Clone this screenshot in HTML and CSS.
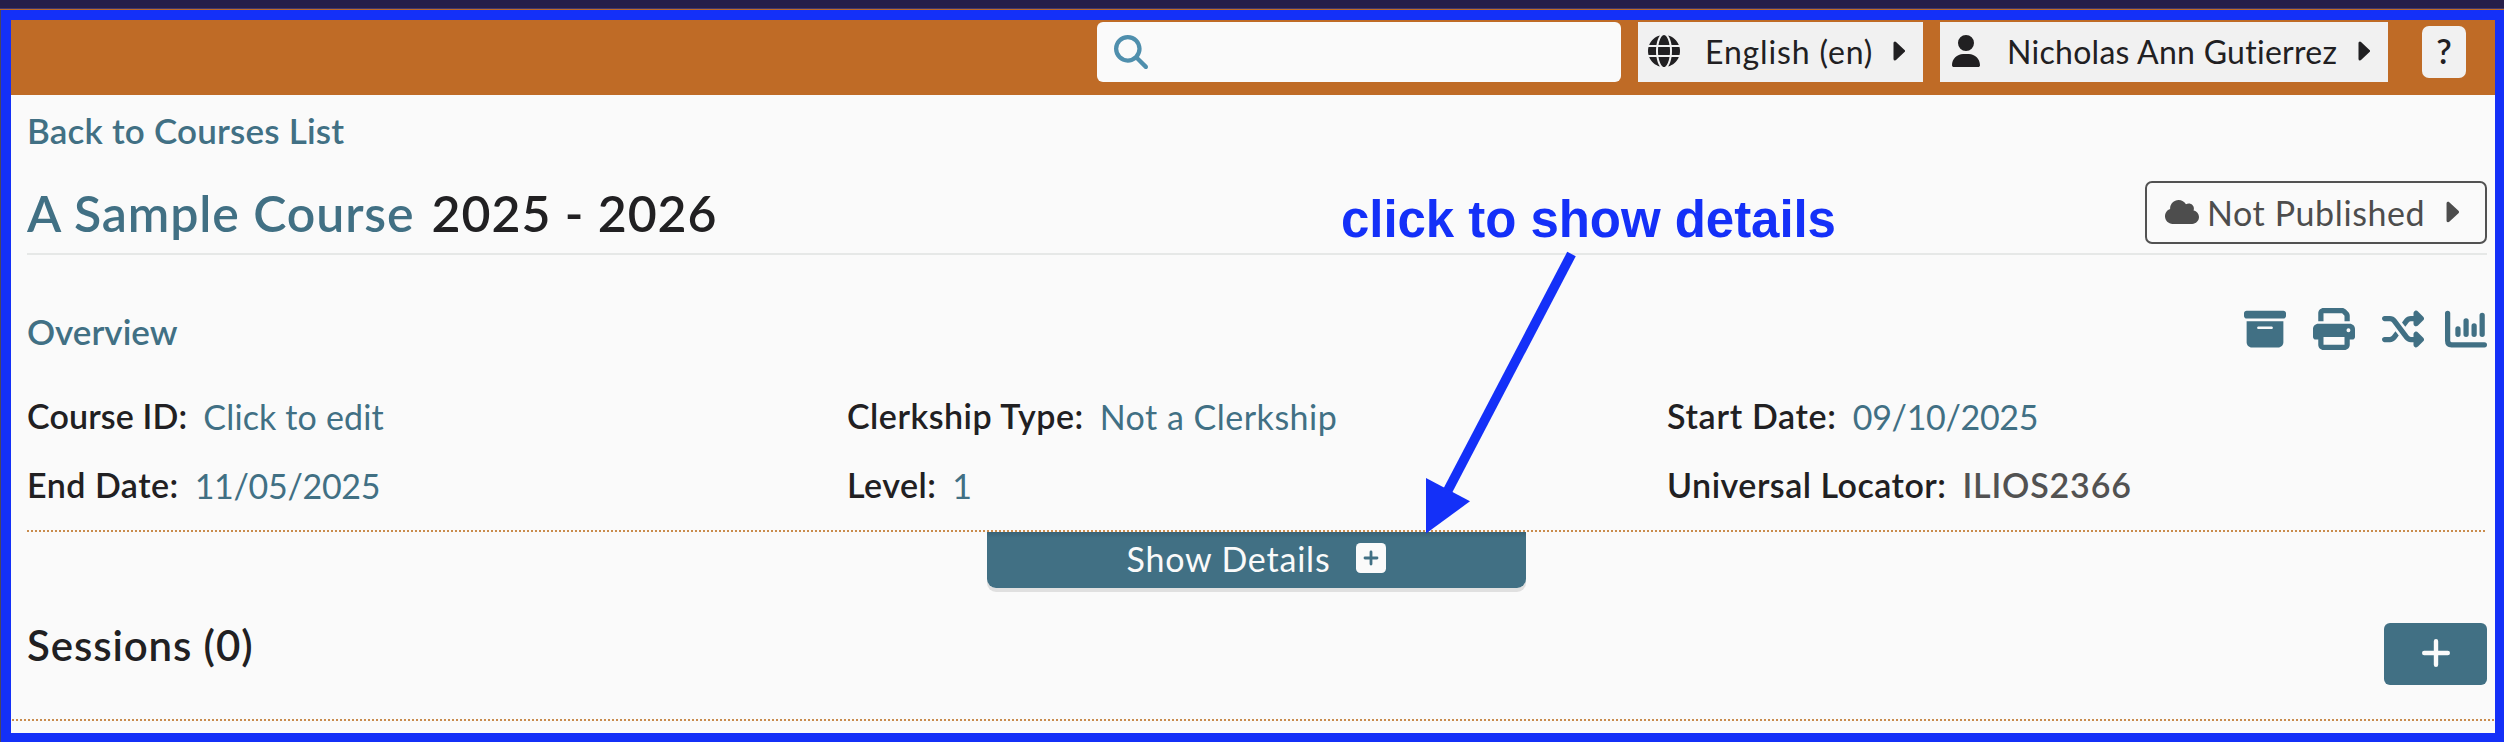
FILE: index.html
```html
<!DOCTYPE html>
<html lang="en">
<head>
<meta charset="utf-8">
<title>A Sample Course</title>
<link rel="stylesheet" href="styles.css">
</head>
<body>
<svg class="defs" aria-hidden="true">
  <symbol id="caret" viewBox="0 0 12 20"><path d="M2 2v16l8.5-8z" fill="currentColor" stroke="currentColor" stroke-width="3" stroke-linejoin="round"/></symbol>
</svg>
<div class="topbar"></div>
<div class="frame">
  <header class="header">
    <div class="search">
      <svg width="34" height="34" viewBox="0 0 512 512" fill="currentColor"><path d="M416 208c0 45.9-14.9 88.3-40 122.7L502.6 457.4c12.5 12.5 12.5 32.8 0 45.3s-32.8 12.5-45.3 0L330.7 376c-34.4 25.2-76.8 40-122.7 40C93.1 416 0 322.9 0 208S93.1 0 208 0S416 93.1 416 208zM208 352a144 144 0 1 0 0-288 144 144 0 1 0 0 288z"/></svg>
    </div>
    <button class="menu lang">
      <svg width="32" height="32" viewBox="0 0 512 512" fill="currentColor"><path d="M352 256c0 22.2-1.2 43.6-3.3 64H163.3c-2.2-20.4-3.3-41.8-3.3-64s1.2-43.6 3.3-64H348.7c2.2 20.4 3.3 41.8 3.3 64zm28.8-64H503.9c5.3 20.5 8.1 41.9 8.1 64s-2.8 43.5-8.1 64H380.8c2.1-20.6 3.2-42 3.2-64s-1.1-43.4-3.2-64zm112.6-32H376.7c-10-63.9-29.8-117.4-55.3-151.6c78.3 20.7 142 77.5 171.9 151.6zm-149.1 0H167.7c6.1-36.4 15.5-68.6 27-94.7c10.5-23.6 22.2-40.7 33.5-51.5C239.4 3.2 248.7 0 256 0s16.6 3.2 27.8 13.8c11.3 10.8 23 27.9 33.5 51.5c11.6 26 20.9 58.2 27 94.7zm-209 0H18.6C48.6 85.9 112.2 29.1 190.6 8.4C165.1 42.6 145.3 96.1 135.3 160zM8.1 192H131.2c-2.1 20.6-3.2 42-3.2 64s1.1 43.4 3.2 64H8.1C2.8 299.5 0 278.1 0 256s2.8-43.5 8.1-64zM194.7 446.6c-11.6-26-20.9-58.2-27-94.6H344.3c-6.1 36.4-15.5 68.6-27 94.6c-10.5 23.6-22.2 40.7-33.5 51.5C272.6 508.8 263.3 512 256 512s-16.6-3.2-27.8-13.8c-11.3-10.8-23-27.9-33.5-51.5zM135.3 352c10 63.9 29.8 117.4 55.3 151.6C112.2 482.9 48.6 426.1 18.6 352H135.3zm358.1 0c-30 74.1-93.6 130.9-171.9 151.6c25.5-34.2 45.2-87.7 55.3-151.6H493.4z"/></svg>
      <span class="menu-label">English (en)</span>
      <svg class="caret" width="12" height="20"><use href="#caret"/></svg>
    </button>
    <button class="menu user">
      <svg width="28" height="32" viewBox="0 0 448 512" fill="currentColor"><path d="M224 256A128 128 0 1 0 224 0a128 128 0 1 0 0 256zm-45.7 48C79.8 304 0 383.8 0 482.3C0 498.7 13.3 512 29.7 512H418.3c16.4 0 29.7-13.3 29.7-29.7C448 383.8 368.2 304 269.7 304H178.3z"/></svg>
      <span class="menu-label">Nicholas Ann Gutierrez</span>
      <svg class="caret" width="12" height="20"><use href="#caret"/></svg>
    </button>
    <button class="help">?</button>
  </header>

  <main class="main">
    <a class="back">Back to Courses List</a>

    <section class="title-row">
      <h1 class="title"><span class="course">A Sample Course</span><span class="years">2025 - 2026</span></h1>
      <button class="publish">
        <svg width="34" height="24" viewBox="0 32 640 448" fill="currentColor"><path d="M0 336c0 79.5 64.5 144 144 144H512c70.7 0 128-57.3 128-128c0-61.9-44-113.6-102.4-125.4c4.1-10.7 6.4-22.4 6.4-34.6c0-53-43-96-96-96c-19.7 0-38.1 6-53.3 16.2C367 64.2 315.3 32 256 32C167.6 32 96 103.6 96 192c0 2.7 .1 5.4 .2 8.1C40.2 219.8 0 273.2 0 336z"/></svg>
        <span class="publish-label">Not Published</span>
        <svg class="caret" width="13" height="22" viewBox="0 0 12 20"><use href="#caret"/></svg>
      </button>
    </section>

    <section class="overview-head">
      <h2 class="overview">Overview</h2>
      <div class="actions">
        <svg width="42" height="42" viewBox="0 0 512 512" fill="currentColor"><path d="M32 32H480c17.7 0 32 14.3 32 32V96c0 17.7-14.3 32-32 32H32C14.3 128 0 113.7 0 96V64C0 46.3 14.3 32 32 32zm0 128H480V416c0 35.3-28.7 64-64 64H96c-35.3 0-64-28.7-64-64V160zm128 80c0 8.8 7.2 16 16 16H336c8.8 0 16-7.2 16-16s-7.2-16-16-16H176c-8.8 0-16 7.2-16 16z"/></svg>
        <svg width="42" height="42" viewBox="0 0 512 512" fill="currentColor"><path d="M128 0C92.7 0 64 28.7 64 64v96h64V64H354.7L384 93.3V160h64V93.3c0-17-6.7-33.3-18.7-45.3L400 18.7C388 6.7 371.7 0 354.7 0H128zM384 352v32 64H128V384 368 352H384zm64 32h32c17.7 0 32-14.3 32-32V256c0-35.3-28.7-64-64-64H64c-35.3 0-64 28.7-64 64v96c0 17.7 14.3 32 32 32H64v64c0 35.3 28.7 64 64 64H384c35.3 0 64-28.7 64-64V384zM432 248a24 24 0 1 1 0 48 24 24 0 1 1 0-48z"/></svg>
        <svg width="42" height="42" viewBox="0 0 512 512" fill="currentColor"><path d="M403.8 34.4c12-5 25.7-2.2 34.9 6.9l64 64c6 6 9.4 14.1 9.4 22.6s-3.4 16.6-9.4 22.6l-64 64c-9.2 9.2-22.9 11.9-34.9 6.9s-19.8-16.6-19.8-29.6V160H352c-10.1 0-19.6 4.7-25.6 12.8L284 229.3 244 176l31.2-41.6C293.3 110.2 321.8 96 352 96h32V64c0-12.9 7.8-24.6 19.8-29.6zM164 282.7L204 336l-31.2 41.6C154.7 401.8 126.2 416 96 416H32c-17.7 0-32-14.3-32-32s14.3-32 32-32H96c10.1 0 19.6-4.7 25.6-12.8L164 282.7zm274.6 188c-9.2 9.2-22.9 11.9-34.9 6.9s-19.8-16.6-19.8-29.6V416H352c-30.2 0-58.7-14.2-76.8-38.4L121.6 172.8c-6-8.1-15.5-12.8-25.6-12.8H32c-17.7 0-32-14.3-32-32s14.3-32 32-32H96c30.2 0 58.7 14.2 76.8 38.4L326.4 339.2c6 8.1 15.5 12.8 25.6 12.8h32V320c0-12.9 7.8-24.6 19.8-29.6s25.7-2.2 34.9 6.9l64 64c6 6 9.4 14.1 9.4 22.6s-3.4 16.6-9.4 22.6l-64 64z"/></svg>
        <svg class="chart" width="42" height="42" viewBox="0 0 512 512" fill="none" stroke="currentColor" stroke-width="64" stroke-linecap="round"><path d="M32 64v336q0 48 48 48H480M158 255v65M257 156v164M355 218v102M453 89v231"/></svg>
      </div>
    </section>

    <dl class="details">
      <div class="field"><dt class="ls-s">Course ID:</dt><dd class="link ls-s">Click to edit</dd></div>
      <div class="field"><dt class="ls-m">Clerkship Type:</dt><dd class="link ls-m">Not a Clerkship</dd></div>
      <div class="field"><dt class="ls-n">Start Date:</dt><dd class="link date">09/10/2025</dd></div>
      <div class="field"><dt class="ls-m">End Date:</dt><dd class="link date">11/05/2025</dd></div>
      <div class="field"><dt class="ls-m">Level:</dt><dd class="link">1</dd></div>
      <div class="field"><dt class="ls-m">Universal Locator:</dt><dd class="locator">ILIOS2366</dd></div>
    </dl>
    <div class="dots"></div>
    <button class="show-details">
      <span class="show-label">Show Details</span>
      <svg width="30" height="30" viewBox="0 0 30 30"><rect width="30" height="30" rx="4.5" fill="#fafafa"/><path d="M15 9v12M9 15h12" stroke="#417084" stroke-width="2.8" stroke-linecap="round"/></svg>
    </button>

    <section class="sessions">
      <h2 class="sessions-title">Sessions (0)</h2>
      <button class="add"><svg width="28" height="28" viewBox="0 0 28 28"><path d="M14 2.2v23.6M2.2 14h23.6" stroke="#fafafa" stroke-width="4.4" stroke-linecap="round"/></svg></button>
    </section>
  </main>
  <div class="dots last"></div>
</div>

<div class="callout">click to show details</div>
<svg class="arrow" width="160" height="290" viewBox="1420 250 160 290"><path d="M1571.5 254L1446 494" stroke="#1430f8" stroke-width="9.6"/><path d="M1426 533.5V478l44 23.3z" fill="#1430f8"/></svg>
</body>
</html>
```
FILE: styles.css
```css
* { box-sizing: border-box; }
body {
  margin: 0;
  width: 2504px;
  height: 742px;
  position: relative;
  overflow: hidden;
  display: flex;
  flex-direction: column;
  background: #1430f8;
  color: #212022;
  font-family: Lato, sans-serif;
  font-size: 34px;
}
button { font: inherit; color: inherit; border: 0; padding: 0; display: flex; align-items: center; }
h1, h2, dl, dd { margin: 0; }
svg { display: block; flex: none; }
.defs { position: absolute; width: 0; height: 0; }

.topbar { flex: none; height: 10px; background: #261d49; border-bottom: 1px solid #bf6b26; box-shadow: inset 0 -1px #41366b; }
.frame {
  flex: 1;
  display: flex;
  flex-direction: column;
  border: 1px solid #1430f8;
  border-width: 10px 9px 9px 10px;
  margin-left: 1px;
  background: #fafafa;
  box-shadow: -1px 0 #4a4560;
}

.header {
  height: 75px;
  flex: none;
  display: flex;
  align-items: flex-start;
  justify-content: flex-end;
  padding: 2px 29px 0 0;
  background: #bf6b26;
}
.search { width: 524px; height: 60px; margin-right: 17px; padding: 13px 17px; border-radius: 6px; background: #fafafa; color: #4f8fad; }
.menu { height: 60px; background: #f1f1f1; font-size: 32px; }
.menu > svg { margin-bottom: 2px; }
.lang { width: 285px; margin-right: 17px; padding: 0 18px 0 10px; }
.user { width: 448px; margin-right: 34px; padding: 0 18px 0 12px; }
.menu-label { padding-bottom: 2px; }
.lang .menu-label { margin-left: 25px; letter-spacing: .85px; }
.user .menu-label { margin-left: 27px; letter-spacing: .28px; }
.menu .caret { margin-left: auto; }
.help { width: 44px; height: 52px; margin-top: 4px; padding-bottom: 4px; justify-content: center; border-radius: 7px; background: #f1f1f1; font-size: 34px; font-weight: 600; }

.main { padding: 0 8px 0 16px; flex: none; }
.back { display: block; height: 69px; line-height: 71px; font-size: 35px; font-weight: 600; letter-spacing: .2px; color: #417084; }
.title-row { height: 91px; display: flex; justify-content: space-between; align-items: flex-start; border-bottom: 2px solid #e6e8e7; padding-top: 17px; }
.title { height: 62px; line-height: 64px; font-size: 50px; font-weight: 600; }
.course { letter-spacing: .9px; color: #417084; }
.years { margin-left: 17px; letter-spacing: .95px; }
.publish { width: 342px; height: 63px; padding: 0 26px 0 18px; border: 2px solid #525252; border-radius: 7px; background: none; color: #4d4d4d; }
.publish > svg { margin-bottom: 2px; }
.publish-label { margin-left: 8px; padding-bottom: 1px; letter-spacing: .6px; }
.publish .caret { margin-left: auto; }

.overview-head { height: 60px; margin-top: 45px; display: flex; justify-content: space-between; color: #417084; }
.overview { line-height: 62px; font-size: 35px; font-weight: 600; }
.actions { display: flex; gap: 27px; padding-top: 8px; }
.actions .chart { margin-left: -6px; }

.details { display: grid; grid-template-columns: 820px 820px 1fr; grid-auto-rows: 69px; margin-top: 21px; height: 149px; }
.field { display: flex; gap: 16px; line-height: 70px; }
.field dt { font-weight: 600; }
.field dd { padding-top: 1px; }
.link { color: #417084; }
.ls-s { letter-spacing: .15px; }
.ls-m { letter-spacing: .5px; }
.ls-n { letter-spacing: .7px; }
.date { letter-spacing: -.3px; }
.field .locator { padding-top: 0; font-weight: 600; letter-spacing: .8px; color: #525252; }

.dots { height: 2px; flex: none; background: repeating-linear-gradient(90deg, #c98c4d 0 2px, transparent 2px 4px); }
.show-details {
  width: 539px;
  height: 56px;
  margin-left: 960px;
  justify-content: center;
  gap: 26px;
  border-radius: 0 0 9px 9px;
  background: linear-gradient(#3a6376, #417084 6px);
  box-shadow: 0 4px #e0e0e0;
  color: #fafafa;
  letter-spacing: .8px;
}
.show-label { padding-bottom: 3px; }
.show-details svg { margin-bottom: 4px; }
.sessions { height: 62px; margin-top: 35px; display: flex; justify-content: space-between; }
.sessions-title { line-height: 44px; font-size: 42px; font-weight: 600; letter-spacing: .9px; }
.add { width: 103px; height: 62px; padding-bottom: 3px; justify-content: center; border-radius: 6px; background: #417084; }
.last { margin: 34px 0 0 1px; }

.callout { position: absolute; left: 1341px; top: 191px; font: bold 51px/57px "Liberation Sans", sans-serif; letter-spacing: -.05px; color: #1430f8; white-space: nowrap; }
.arrow { position: absolute; left: 1420px; top: 250px; }
```
